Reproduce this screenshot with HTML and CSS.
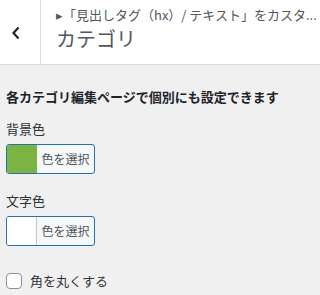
FILE: index.html
```html
<!DOCTYPE html>
<html lang="ja">
<head>
  <meta charset="UTF-8" />
  <meta name="viewport" content="width=device-width, initial-scale=1.0"/>
  <title>カテゴリ</title>
  <link rel="stylesheet" href="styles.css">
</head>
<body>
  <div class="section-title">
    <button class="back-btn" aria-label="戻る">
      <svg width="10" height="14" viewBox="0 0 10 14">
        <path d="M7.5 1.5 L2.5 7 L7.5 12.5" fill="none" stroke="#1d2327" stroke-width="2.2"/>
      </svg>
    </button>
    <div class="title-text">
      <div class="crumb">▸「見出しタグ（hx）/ テキスト」をカスタ...</div>
      <h3>カテゴリ</h3>
    </div>
  </div>

  <ul class="controls">
    <li class="desc">各カテゴリ編集ページで個別にも設定できます</li>

    <li class="control">
      <span class="label">背景色</span>
      <button class="color-result">
        <span class="swatch green"></span>
        <span class="btn-text">色を選択</span>
      </button>
    </li>

    <li class="control">
      <span class="label">文字色</span>
      <button class="color-result">
        <span class="swatch"></span>
        <span class="btn-text">色を選択</span>
      </button>
    </li>

    <li class="control check">
      <label><input type="checkbox" /> 角を丸くする</label>
    </li>
  </ul>
</body>
</html>
```

FILE: styles.css
```css
* {
  box-sizing: border-box;
}

body {
  margin: 0;
  background: #f0f0f1;
  font-family: "Noto Sans CJK JP", "Noto Sans", sans-serif;
  font-size: 13px;
  color: #2c3338;
}

.section-title {
  display: flex;
  height: 65px;
  background: #fff;
  border-bottom: 1px solid #dcdcde;
}

.back-btn {
  width: 41px;
  padding: 0;
  border: 0;
  border-right: 1px solid #dcdcde;
  background: #fff;
  display: flex;
  align-items: center;
  justify-content: center;
  padding-right: 9px;
  padding-top: 1px;
}

.title-text {
  padding: 5px 0 0 15px;
  color: #50575e;
  white-space: nowrap;
  overflow: hidden;
}

.crumb {
  font-size: 13px;
  line-height: 20px;
}

.title-text h3 {
  margin: 0;
  font-size: 20px;
  font-weight: 400;
  line-height: 28px;
  color: #50575e;
}

.controls {
  list-style: none;
  margin: 0;
  padding: 22px 6px 0;
}

.desc {
  font-weight: 700;
  line-height: 20px;
  color: #1d2327;
  margin-bottom: 12px;
}

.control {
  margin-bottom: 17px;
}

.label {
  display: block;
  line-height: 20px;
  margin-bottom: 5px;
}

.color-result {
  display: flex;
  width: 89px;
  height: 30px;
  padding: 0;
  border: 1px solid #2271b1;
  border-radius: 3px;
  background: #f6f7f7;
  overflow: hidden;
  font-family: inherit;
}

.swatch {
  width: 30px;
  height: 100%;
  background: #fff;
  border-right: 1px solid #c3c4c7;
}

.swatch.green {
  background: #7bb443;
  border-right: 0;
}

.btn-text {
  flex: 1;
  font-size: 12px;
  line-height: 28px;
  color: #50575e;
  text-align: center;
}

.check {
  padding-top: 8px;
}

.check label {
  display: flex;
  align-items: center;
  gap: 8px;
  line-height: 20px;
}

.check input {
  appearance: none;
  margin: 0;
  width: 16px;
  height: 16px;
  border: 1px solid #8c8f94;
  border-radius: 4px;
  background: #fff;
}
```
